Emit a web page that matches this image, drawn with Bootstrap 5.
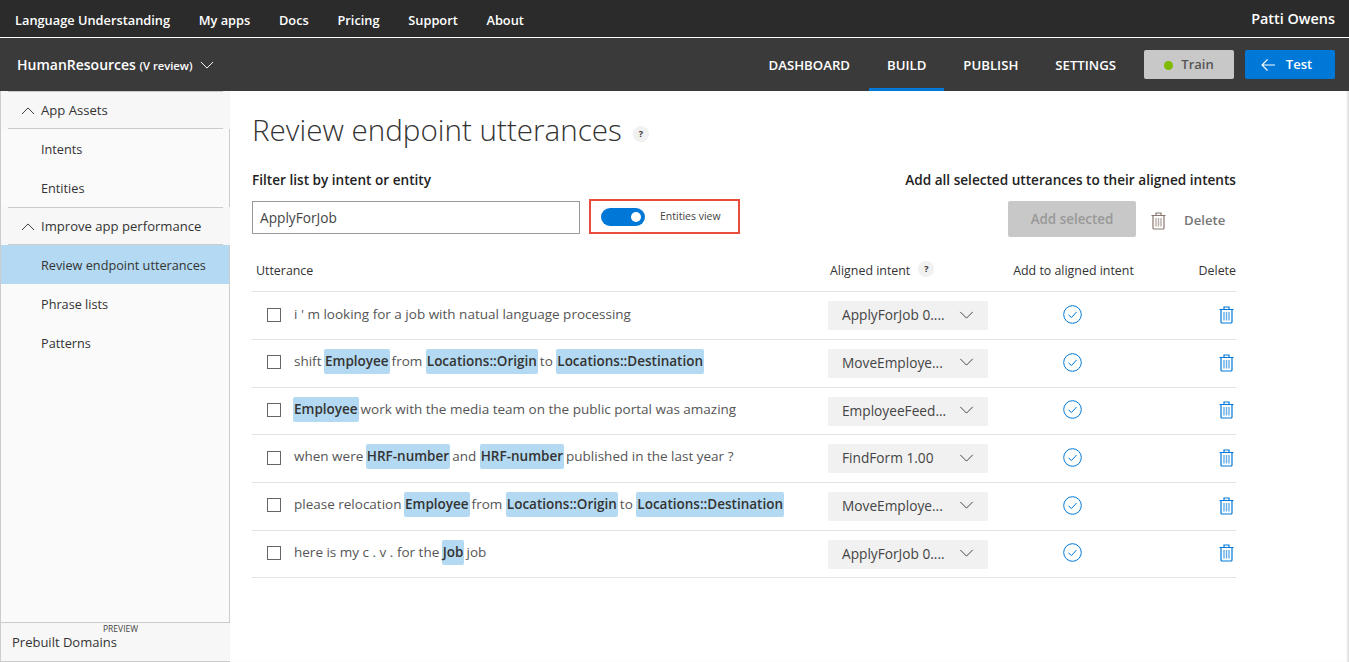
<!DOCTYPE html>
<html lang="en">

<head>
    <meta charset="UTF-8">
    <title>Review endpoint utterances</title>
    <link href="https://cdn.jsdelivr.net/npm/bootstrap@5.3.3/dist/css/bootstrap.min.css" rel="stylesheet">
    <style>
        html, body { height: 100%; overflow: hidden; }
        body { font-family: "Open Sans", "Noto Sans", sans-serif; font-size: 13px; color: #333; background: #fff; }
        .top-bar { height: 38px; background: #2b2b2b; border-bottom: 1px solid #fff; color: #fff; padding: 5px 14px 0 15px; font-weight: 600; font-size: 12.8px; }
        .top-bar a { color: #fff; text-decoration: none; margin-right: 28.7px; }
        .user-name { font-size: 14.4px; margin-top: -5px; }
        .app-bar { height: 53px; background: #3a3a3a; color: #fff; padding: 0 14px 0 17px; }
        .app-name { font-size: 14px; font-weight: 600; }
        .app-name small { font-size: 11.2px; }
        .app-tab { color: #fff; text-decoration: none; font-size: 13.2px; font-weight: 600; height: 52px; line-height: 52px; padding: 0 18px; margin-right: 1px; }
        .app-tab.active-tab { border-bottom: 3px solid #0078d7; }
        .btn-train, .btn-test { width: 90px; height: 29px; border-radius: 2px; font-size: 13px; font-weight: 600; padding: 1px 0 0; border: 0; }
        .btn-train { background: #c8c8c8; color: #555; margin-left: 9px; }
        .btn-test { background: #0078d7; color: #fff; margin-left: 11px; padding-right: 7px; gap: 11px; }
        .train-dot { width: 9px; height: 9px; border-radius: 50%; background: #7fba00; }
        .page-body { height: 571px; box-shadow: inset -3px 0 3px -2px #ccc; }
        .side-nav { width: 230px; background: #fafafa; border-left: 1px solid #ccc; border-right: 1px solid #ccc; flex-shrink: 0; }
        .side-head { height: 38px; background: #f7f7f7; margin-right: -1px; padding: 2px 0 0 20px; gap: 6px; font-size: 13.1px; font-weight: 500; position: relative; }
        .side-head::before, .side-head::after { content: ""; position: absolute; left: 7px; right: 7px; border-bottom: 1px solid #ccc; }
        .side-head::before { top: 0; }
        .side-head::after { bottom: 0; }
        .side-item { height: 39px; padding: 3px 0 0 40px; font-size: 12.7px; color: #333; text-decoration: none; }
        .side-item.current { background: #b3daf2; }
        .side-foot { height: 40px; background: #f7f7f7; border-top: 1px solid #ccc; border-bottom: 1px solid #ccc; margin-right: -1px; padding: 2px 0 0 11px; font-size: 13px; font-weight: 500; position: relative; }
        .preview-tag { position: absolute; left: 102px; top: 0; font-size: 8.5px; color: #444; }
        .main-pane { padding: 18px 113px 0 22px; min-width: 0; }
        .page-title { font-size: 29.6px; font-weight: 300; color: #333; margin: 0; line-height: 42px; }
        .help-dot { width: 16px; height: 16px; border-radius: 50%; background: #f1f1f1; font-size: 9px; font-weight: 700; color: #333; }
        .title-help { margin-left: 11px; margin-top: 8px; }
        .head-help { margin-top: -5px; }
        .filter-row { margin-top: 19px; }
        .filter-label { font-size: 13.6px; font-weight: 600; color: #222; margin-bottom: 9px; }
        .filter-input { width: 328px; height: 33px; border: 1px solid #999; padding: 0 7px; font-size: 13.7px; color: #444; border-radius: 0; }
        .toggle-box { width: 151px; height: 35px; border: 2px solid #e74c3c; margin-left: 9px; padding-left: 10px; }
        .toggle-pill { width: 44px; height: 18px; border-radius: 9px; background: #0078d7; position: relative; }
        .toggle-pill::after { content: ""; position: absolute; right: 4px; top: 4px; width: 10px; height: 10px; border-radius: 50%; background: #fff; }
        .toggle-text { font-size: 10.5px; margin-left: 15px; color: #444; }
        .add-row { margin-top: 11px; }
        .filter-label-end { margin-bottom: 0; }
        .btn-add { width: 128px; height: 36px; background: #c8c8c8; color: #999; font-size: 13.4px; font-weight: 600; border: 0; border-radius: 2px; padding: 0; }
        .delete-all { color: #777; font-size: 13.2px; font-weight: 600; width: 100px; padding-left: 15px; gap: 18px; margin-top: 4px; }
        .trash-muted { color: #8a7670; }
        .col-utter { flex: 1; min-width: 0; }
        .col-intent { width: 183px; flex-shrink: 0; }
        .col-add { width: 125px; flex-shrink: 0; text-align: center; }
        .col-del { width: 100px; flex-shrink: 0; text-align: right; }
        .table-box { margin-top: 10px; }
        .head-row { height: 45px; padding-top: 4px; border-bottom: 1px solid #e3e3e3; font-size: 12.4px; font-weight: 500; color: #333; }
        .head-row .col-intent { padding-left: 2px; }
        .data-row { height: 47.67px; border-bottom: 1px solid #e3e3e3; font-size: 13.5px; color: #555; }
        .data-row .col-utter, .data-row .col-add, .data-row .col-del { padding-bottom: 4px; }
        .row-check { width: 14px; height: 14px; border: 1px solid #666; margin: 2px 13px 0 15px; flex-shrink: 0; }
        .entity-tag { display: inline-block; background: #b3daf2; color: #333; font-weight: 600; border-radius: 2px; padding: 0 1px; height: 25px; line-height: 25px; margin-right: -1.5px; }
        .entity-tag:first-child { margin-left: -1px; }
        .intent-select { width: 160px; height: 29px; background: #f1f1f1; border-radius: 2px; padding: 0 14px; font-size: 13.7px; color: #444; }
        .chev-dark { color: #444; margin-top: -2px; }
        .ic-blue { color: #0078d7; }
        .ic-check { margin-right: 2px; }
        .ic-trash { margin-right: 2px; }
    </style>
</head>

<body>
    <svg width="0" height="0" class="d-block position-absolute">
        <symbol id="ic-down" viewBox="0 0 16 9"><path d="M1 1l7 7 7-7" fill="none" stroke="currentColor" stroke-width="1.1"/></symbol>
        <symbol id="ic-up" viewBox="0 0 16 9"><path d="M1 8l7-7 7 7" fill="none" stroke="currentColor" stroke-width="1.1"/></symbol>
        <symbol id="ic-trash" viewBox="0 0 15 18">
            <path d="M.5 3.500h14M5 3.500V1h5v2.500M2 3.500V16a1 1 0 0 0 1 1h9a1 1 0 0 0 1-1V3.500" fill="none" stroke="currentColor" stroke-width="1.200"/>
            <path d="M5 6v8.500M7.500 6v8.500M10 6v8.500" fill="none" stroke="currentColor" stroke-width="1.400" opacity=".6"/>
        </symbol>
        <symbol id="ic-check" viewBox="0 0 19 19">
            <circle cx="9.500" cy="9.500" r="8.800" fill="none" stroke="currentColor" stroke-width="1"/>
            <path d="M5.500 10l3 2.500 5-5.500" fill="none" stroke="currentColor" stroke-width="1"/>
        </symbol>
    </svg>

    <!-- Barra superior -->
    <div class="top-bar d-flex align-items-center">
        <a href="#">Language Understanding</a>
        <a href="#">My apps</a>
        <a href="#">Docs</a>
        <a href="#">Pricing</a>
        <a href="#">Support</a>
        <a href="#">About</a>
        <span class="user-name ms-auto">Patti Owens</span>
    </div>

    <!-- Barra de la app -->
    <div class="app-bar d-flex align-items-center">
        <span class="app-name">HumanResources <small>(V review)</small></span>
        <svg class="ms-2" width="14" height="8"><use href="#ic-down"/></svg>
        <div class="ms-auto d-flex align-items-center">
            <a class="app-tab" href="#">DASHBOARD</a>
            <a class="app-tab active-tab" href="#">BUILD</a>
            <a class="app-tab" href="#">PUBLISH</a>
            <a class="app-tab" href="#">SETTINGS</a>
            <button class="btn-train d-flex align-items-center justify-content-center gap-2"><span class="train-dot"></span>Train</button>
            <button class="btn-test d-flex align-items-center justify-content-center">
                <svg width="14" height="12" viewBox="0 0 14 12"><path d="M14 6H1M6.500 .5L1 6l5.500 5.500" fill="none" stroke="#fff" stroke-width="1.100"/></svg>Test
            </button>
        </div>
    </div>

    <div class="page-body d-flex">
        <!-- Menú lateral -->
        <nav class="side-nav d-flex flex-column">
            <div class="side-head d-flex align-items-center"><svg width="14" height="8"><use href="#ic-up"/></svg>App Assets</div>
            <a class="side-item d-flex align-items-center" href="#">Intents</a>
            <a class="side-item d-flex align-items-center" href="#">Entities</a>
            <div class="side-head d-flex align-items-center"><svg width="14" height="8"><use href="#ic-up"/></svg>Improve app performance</div>
            <a class="side-item current d-flex align-items-center" href="#">Review endpoint utterances</a>
            <a class="side-item d-flex align-items-center" href="#">Phrase lists</a>
            <a class="side-item d-flex align-items-center" href="#">Patterns</a>
            <div class="side-foot d-flex align-items-center mt-auto"><span class="preview-tag">PREVIEW</span>Prebuilt Domains</div>
        </nav>

        <!-- Contenido -->
        <main class="main-pane flex-grow-1">
            <div class="d-flex align-items-center">
                <h1 class="page-title">Review endpoint utterances</h1>
                <span class="help-dot title-help d-flex align-items-center justify-content-center">?</span>
            </div>

            <div class="filter-row d-flex justify-content-between">
                <div>
                    <div class="filter-label">Filter list by intent or entity</div>
                    <div class="d-flex align-items-end">
                        <input class="filter-input" value="ApplyForJob">
                        <div class="toggle-box d-flex align-items-center"><span class="toggle-pill"></span><span class="toggle-text">Entities view</span></div>
                    </div>
                </div>
                <div class="text-end">
                    <div class="filter-label filter-label-end">Add all selected utterances to their aligned intents</div>
                    <div class="add-row d-flex align-items-center justify-content-end">
                        <button class="btn-add">Add selected</button>
                        <span class="delete-all d-flex align-items-center"><svg width="15" height="18" class="trash-muted"><use href="#ic-trash"/></svg>Delete</span>
                    </div>
                </div>
            </div>

            <!-- Tabla de utterances -->
            <div id="filas" class="table-box">
                <div class="head-row d-flex align-items-center">
                    <div class="col-utter ps-1">Utterance</div>
                    <div class="col-intent d-flex align-items-center gap-2">Aligned intent <span class="help-dot head-help d-flex align-items-center justify-content-center">?</span></div>
                    <div class="col-add">Add to aligned intent</div>
                    <div class="col-del">Delete</div>
                </div>
            </div>
        </main>
    </div>

    <script>
        let filas = [
            { texto: "i ' m looking for a job with natual language processing", intent: "ApplyForJob 0...." },
            { texto: "shift [Employee] from [Locations::Origin] to [Locations::Destination]", intent: "MoveEmploye..." },
            { texto: "[Employee] work with the media team on the public portal was amazing", intent: "EmployeeFeed..." },
            { texto: "when were [HRF-number] and [HRF-number] published in the last year ?", intent: "FindForm 1.00" },
            { texto: "please relocation [Employee] from [Locations::Origin] to [Locations::Destination]", intent: "MoveEmploye..." },
            { texto: "here is my c . v . for the [Job] job", intent: "ApplyForJob 0...." }
        ];
        let contenedor = document.querySelector("#filas");

        filas.forEach((fila) => {
            let div = document.createElement("div");
            div.classList.add("data-row", "d-flex", "align-items-center");
            let texto = fila.texto.replace(/\[(.+?)\]/g, '<span class="entity-tag">$1</span>');
            div.innerHTML = `
                <div class="col-utter d-flex align-items-center"><span class="row-check"></span><span>${texto}</span></div>
                <div class="col-intent"><div class="intent-select d-flex align-items-center justify-content-between"><span>${fila.intent}</span><svg width="15" height="8" class="chev-dark"><use href="#ic-down"/></svg></div></div>
                <div class="col-add"><svg width="19" height="19" class="ic-blue ic-check"><use href="#ic-check"/></svg></div>
                <div class="col-del"><svg width="15" height="18" class="ic-blue ic-trash"><use href="#ic-trash"/></svg></div>`;
            contenedor.appendChild(div);
        });
    </script>
</body>

</html>
